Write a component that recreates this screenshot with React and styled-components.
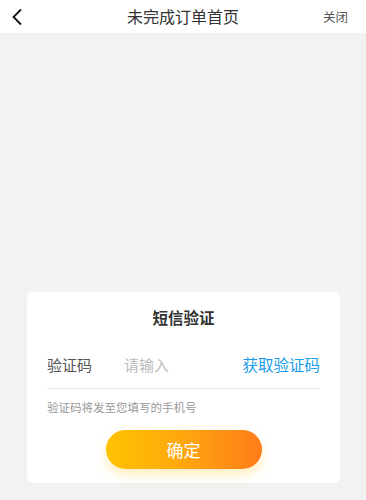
import React from "react";
import styled, { createGlobalStyle } from "styled-components";

const Global = createGlobalStyle`
  html, body { margin: 0; padding: 0; background: #f2f2f2; }
  body { font-family: "Noto Sans CJK SC", "Noto Sans", sans-serif; }
  #root { min-height: 500px; }
`;

const Page = styled.div`
  width: 366px;
  height: 500px;
  display: flex;
  flex-direction: column;
  background: #f2f2f2;
  overflow: hidden;
`;

const NavBar = styled.div`
  height: 33px;
  background: #fff;
  display: grid;
  grid-template-columns: 60px 1fr 60px;
  align-items: center;
  flex-shrink: 0;
`;

const BackBtn = styled.div`
  display: flex;
  align-items: center;
  padding-left: 11px;
  height: 100%;
`;

const NavTitle = styled.div`
  text-align: center;
  font-size: 16px;
  color: #333;
  line-height: 33px;
`;

const CloseBtn = styled.div`
  font-size: 12.5px;
  color: #555;
  text-align: right;
  padding-right: 18px;
  line-height: 33px;
`;

const Body = styled.div`
  flex: 1;
  display: flex;
  flex-direction: column;
  justify-content: flex-end;
  padding: 0 26px 17px 27px;
`;

const Card = styled.div`
  background: #fff;
  border-radius: 6px;
  padding: 14px 20px 14px 20px;
  display: flex;
  flex-direction: column;
`;

const CardTitle = styled.div`
  text-align: center;
  font-size: 15.5px;
  font-weight: 700;
  color: #333;
  line-height: 22px;
`;

const Row = styled.div`
  display: flex;
  align-items: center;
  height: 48px;
  margin-top: 12px;
  border-bottom: 1px solid #ececec;
`;

const Label = styled.div`
  font-size: 15px;
  color: #555;
  width: 77px;
`;

const Input = styled.input`
  flex: 1;
  border: none;
  outline: none;
  padding: 0;
  font-family: inherit;
  font-size: 15px;
  color: #333;
  background: transparent;
  min-width: 0;
  &::placeholder { color: #bbb; }
`;

const GetCode = styled.div`
  font-size: 15.5px;
  color: #1a9be8;
`;

const Hint = styled.div`
  font-size: 11.5px;
  color: #999;
  margin-top: 10px;
  line-height: 17px;
`;

const ButtonWrap = styled.div`
  display: flex;
  justify-content: center;
  margin-top: 14px;
`;

const Confirm = styled.button`
  width: 156px;
  height: 39px;
  border: none;
  border-radius: 20px;
  background: linear-gradient(90deg, #ffc300 0%, #ffa60f 50%, #ff7c1a 100%);
  color: #fff;
  font-family: inherit;
  font-size: 17px;
  box-shadow: 0 6px 12px rgba(255, 200, 40, 0.3);
  cursor: pointer;
`;

export default function App() {
  return (
    <Page>
      <Global />
      <NavBar>
        <BackBtn>
          <svg width="12" height="18" viewBox="0 0 12 18">
            <path d="M10 1.5 L2.5 9 L10 16.5" fill="none" stroke="#111" strokeWidth="1.8" />
          </svg>
        </BackBtn>
        <NavTitle>未完成订单首页</NavTitle>
        <CloseBtn>关闭</CloseBtn>
      </NavBar>
      <Body>
        <Card>
          <CardTitle>短信验证</CardTitle>
          <Row>
            <Label>验证码</Label>
            <Input placeholder="请输入" />
            <GetCode>获取验证码</GetCode>
          </Row>
          <Hint>验证码将发至您填写的手机号</Hint>
          <ButtonWrap>
            <Confirm>确定</Confirm>
          </ButtonWrap>
        </Card>
      </Body>
    </Page>
  );
}
